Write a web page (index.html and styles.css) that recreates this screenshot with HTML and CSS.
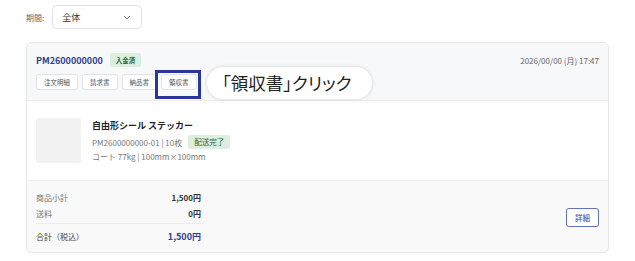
FILE: index.html
```html
<!DOCTYPE html>
<html lang="ja">

<head>
    <meta charset="UTF-8">
    <meta name="viewport" content="width=device-width, initial-scale=1.0">
    <title>注文履歴</title>
    <link rel="stylesheet" href="styles.css">
</head>

<body>
    <div class="filter">
        <span class="filterLabel">期間:</span>
        <div class="select">
            <span>全体</span>
            <svg width="8" height="5" viewBox="0 0 8 5"><path d="M1 1l3 3 3-3" fill="none" stroke="#888" stroke-width="1"/></svg>
        </div>
    </div>

    <div class="card">
        <div class="cardHead">
            <div class="headTop">
                <div class="orderId">
                    <span class="orderNo">PM2600000000</span>
                    <span class="badge">入金済</span>
                </div>
                <span class="date">2026/00/00 (月) 17:47</span>
            </div>
            <div class="docs">
                <span class="docBtn">注文明細</span>
                <span class="docBtn">請求書</span>
                <span class="docBtn">納品書</span>
                <span class="docBtn marked">領収書<span class="callout">「領収書」クリック</span></span>
            </div>
        </div>

        <div class="cardBody">
            <div class="thumb"></div>
            <div class="item">
                <div class="itemName">自由形シール ステッカー</div>
                <div class="itemMeta">PM2600000000-01 | 10枚 <span class="badge">配送完了</span></div>
                <div class="itemMeta">コート 77kg | 100mm×100mm</div>
            </div>
        </div>

        <div class="cardFoot">
            <div class="totals">
                <div class="line"><span>商品小計</span><b>1,500円</b></div>
                <div class="line"><span>送料</span><b>0円</b></div>
                <div class="line sum"><span>合計（税込）</span><b>1,500円</b></div>
            </div>
            <span class="detailBtn">詳細</span>
        </div>
    </div>
</body>

</html>
```

FILE: styles.css
```css
*,
*::before {
    margin: 0;
    padding: 0;
    box-sizing: border-box;
}

body {
    background-color: #fff;
    color: #333;
    font-family: "Noto Sans CJK JP", "Noto Sans", sans-serif;
    font-size: 8px;
    padding: 5px 26px 0;
}

.filter {
    display: flex;
    align-items: center;
    gap: 8px;
}

.filterLabel {
    color: #666;
}

.select {
    display: flex;
    align-items: center;
    justify-content: space-between;
    width: 90px;
    height: 24px;
    padding: 0 10px 0 9px;
    border: 1px solid #e2e2e2;
    border-radius: 5px;
    font-size: 9px;
    color: #333;
}

.card {
    width: 583px;
    margin-top: 13px;
    border: 1px solid #e6e6e6;
    border-radius: 6px;
    box-shadow: 0 1px 2px rgba(0, 0, 0, 0.06);
}

.cardHead {
    background-color: #f7f8fa;
    border-radius: 6px 6px 0 0;
    border-bottom: 1px solid #ececec;
    padding: 9px 9px 10px;
}

.headTop {
    display: flex;
    justify-content: space-between;
    align-items: center;
    height: 16px;
}

.orderId {
    display: flex;
    align-items: center;
    gap: 7px;
}

.orderNo {
    color: #2f3d8f;
    font-weight: bold;
    font-size: 9px;
}

.badge {
    display: inline-block;
    background-color: #dcefdf;
    color: #2e6b3a;
    font-size: 6.5px;
    font-weight: bold;
    padding: 2px 6px;
    border-radius: 2px;
    line-height: 10px;
}

.date {
    color: #666;
    font-size: 8px;
}

.docs {
    display: flex;
    gap: 4px;
    margin-top: 6px;
}

.docBtn {
    display: inline-block;
    height: 16px;
    line-height: 14px;
    padding: 0 7px;
    border: 1px solid #e3e3e3;
    border-radius: 3px;
    background-color: #fff;
    color: #555;
    font-size: 6.5px;
}

.marked {
    position: relative;
}

.marked::before {
    content: '';
    position: absolute;
    left: -7px;
    top: -5px;
    width: 46px;
    height: 29px;
    border: 3px solid #2a379a;
}

.callout {
    position: absolute;
    left: 45px;
    top: -8px;
    width: 165px;
    height: 32px;
    line-height: 31px;
    padding-left: 15px;
    background-color: #fff;
    border-radius: 16px;
    box-shadow: 0 0 4px rgba(0, 0, 0, 0.15);
    color: #222;
    font-size: 17.5px;
    font-feature-settings: "palt";
    white-space: nowrap;
}

.cardBody {
    display: flex;
    gap: 11px;
    padding: 17px 9px 17px;
    background-color: #fff;
}

.thumb {
    width: 45px;
    height: 45px;
    background-color: #f2f2f2;
    border-radius: 2px;
}

.item {
    display: flex;
    flex-direction: column;
    gap: 2px;
    padding-top: 1px;
}

.itemName {
    font-weight: bold;
    font-size: 9px;
    color: #222;
    margin-bottom: 1px;
}

.itemMeta {
    color: #777;
    font-size: 8px;
    display: flex;
    align-items: center;
    gap: 6px;
}

.itemMeta .badge {
    font-weight: normal;
    font-size: 7.5px;
    color: #2e5d36;
}

.cardFoot {
    display: flex;
    justify-content: space-between;
    align-items: center;
    background-color: #f9f9f9;
    border-top: 1px solid #efefef;
    border-radius: 0 0 6px 6px;
    padding: 8px 9px 7px;
}

.totals {
    width: 165px;
}

.line {
    display: flex;
    justify-content: space-between;
    height: 16px;
    align-items: center;
    color: #777;
}

.line b {
    color: #333;
}

.sum {
    border-top: 1px solid #ececec;
    margin-top: 2px;
    padding-top: 4px;
    height: 22px;
    color: #444;
}

.sum b {
    color: #2f3d8f;
    font-size: 9px;
}

.detailBtn {
    display: inline-block;
    height: 19px;
    line-height: 17px;
    padding: 0 8px;
    border: 1px solid #6373b8;
    border-radius: 3px;
    color: #2f3d8f;
    font-size: 7.5px;
    background-color: #fff;
}
```
